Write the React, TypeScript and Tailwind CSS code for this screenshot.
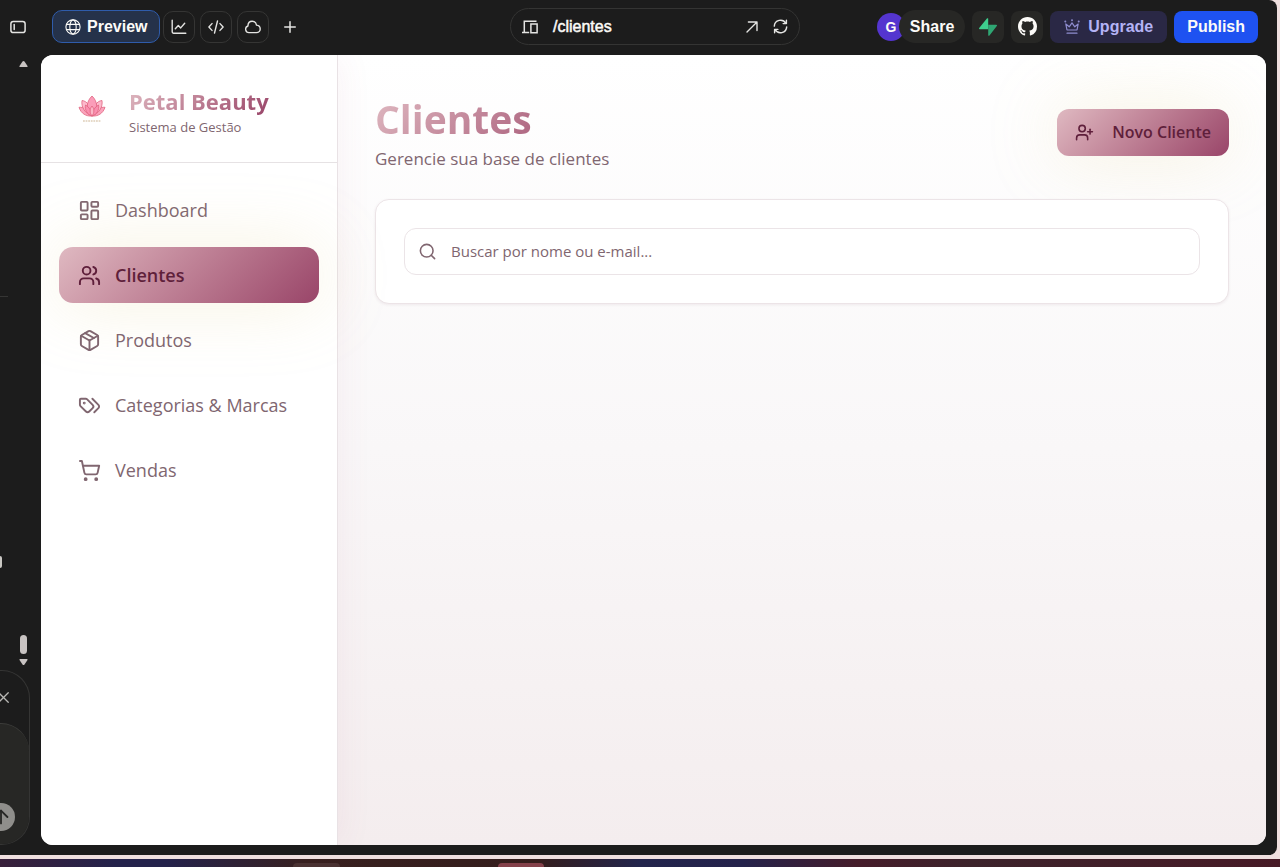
import type { ReactNode } from "react";
import {
  ArrowUp,
  LayoutDashboard,
  Package,
  Plus,
  Search,
  ShoppingCart,
  UserPlus,
  Users,
  X,
} from "lucide-react";

type IconProps = { className?: string };

const stroke = {
  viewBox: "0 0 24 24",
  fill: "none",
  stroke: "currentColor",
  strokeLinecap: "round" as const,
  strokeLinejoin: "round" as const,
  "aria-hidden": true,
};

function TagsIcon({ className }: IconProps) {
  return (
    <svg {...stroke} strokeWidth="2" className={className}>
      <path d="m15 5 6.3 6.3a2.4 2.4 0 0 1 0 3.4L17 19" />
      <path d="M9.586 5.586A2 2 0 0 0 8.172 5H3a1 1 0 0 0-1 1v5.172a2 2 0 0 0 .586 1.414L8.29 18.29a2.426 2.426 0 0 0 3.42 0l3.58-3.58a2.426 2.426 0 0 0 0-3.42z" />
      <circle cx="6.5" cy="9.5" r=".5" fill="currentColor" />
    </svg>
  );
}

function SidebarToggleIcon({ className }: IconProps) {
  return (
    <svg {...stroke} viewBox="0 0 16 14" strokeWidth="1.5" className={className}>
      <rect x="0.9" y="1.4" width="14.2" height="11.2" rx="2.4" />
      <path d="M4.2 4.4v5.2" />
    </svg>
  );
}

function GlobeIcon({ className }: IconProps) {
  return (
    <svg {...stroke} viewBox="0 0 16 16" strokeWidth="1.1" className={className}>
      <circle cx="8" cy="8" r="7.1" />
      <ellipse cx="8" cy="8" rx="3.2" ry="7.1" />
      <path d="M1.6 5.4h12.8M1.6 10.6h12.8" />
    </svg>
  );
}

function ChartIcon({ className }: IconProps) {
  return (
    <svg {...stroke} viewBox="0 0 16 16" strokeWidth="1.4" className={className}>
      <path d="M1.2 1.2v11.6a1.4 1.4 0 0 0 1.4 1.4h12.2M4.3 9.8l3-3.2 2.4 2.3 4-4.6" />
    </svg>
  );
}

function CodeIcon({ className }: IconProps) {
  return (
    <svg {...stroke} viewBox="0 0 16 14" strokeWidth="1.4" className={className}>
      <path d="M4 3.6.9 7 4 10.4M12 3.6 15.1 7 12 10.4M9.5 1 6.5 13" />
    </svg>
  );
}

function CloudIcon({ className }: IconProps) {
  return (
    <svg {...stroke} viewBox="0 0 16 14" strokeWidth="1.4" className={className}>
      <path d="M4.2 12.6a3.4 3.4 0 0 1-1.300-6.600C3 3.200 4.800 1.200 7.200 1.200c2.300 0 3.900 1.600 4.300 3.900 2.200.2 3.700 1.800 3.700 3.800s-1.600 3.700-3.700 3.700z" />
    </svg>
  );
}

function DevicesIcon({ className }: IconProps) {
  return (
    <svg {...stroke} viewBox="0 0 16 14" strokeWidth="1.5" strokeLinecap="butt" strokeLinejoin="miter" className={className}>
      <path d="M2.3 12.4V1.2h12.2M0 12.6h7.2M8.9 3.9h6.2v8.8H8.9z" />
    </svg>
  );
}

function ArrowIcon({ className }: IconProps) {
  return (
    <svg {...stroke} viewBox="0 0 12 12" strokeWidth="1.4" className={className}>
      <path d="M1 11 11 1M2.4 1H11v8.6" />
    </svg>
  );
}

function RefreshIcon({ className }: IconProps) {
  return (
    <svg {...stroke} viewBox="0 0 16 16" strokeWidth="1.5" className={className}>
      <path d="M1.400 7.600a6.600 6.600 0 0 1 12.300-3M14.300 1.400v3.500h-3.500M14.600 8.400a6.600 6.600 0 0 1-12.300 3M1.700 14.600v-3.500h3.500" />
    </svg>
  );
}

function SupabaseIcon({ className }: IconProps) {
  return (
    <svg viewBox="0 0 18 18" aria-hidden="true" className={className}>
      <path d="M9.200 17.300V6.700h8c.8 0 1.100.8.600 1.400l-7.300 9.400c-.5.6-1.300.400-1.300-.2z" fill="#2fa673" />
      <path d="M9.200.7v10.600H.8c-.7 0-1-.8-.6-1.400L7.900.5c.5-.6 1.300-.400 1.300.2z" fill="#3ecf8e" />
    </svg>
  );
}

function GithubIcon({ className }: IconProps) {
  return (
    <svg viewBox="0 0 16 16" fill="currentColor" aria-hidden="true" className={className}>
      <path d="M8 0C3.58 0 0 3.58 0 8c0 3.54 2.29 6.53 5.47 7.59.4.07.55-.17.55-.38 0-.19-.01-.82-.01-1.49-2.01.37-2.53-.49-2.69-.94-.09-.23-.48-.94-.82-1.13-.28-.15-.68-.52-.01-.53.63-.01 1.08.58 1.23.82.72 1.21 1.87.87 2.33.66.07-.52.28-.87.51-1.07-1.78-.2-3.64-.89-3.64-3.95 0-.87.31-1.59.82-2.15-.08-.2-.36-1.02.08-2.12 0 0 .67-.21 2.2.82.64-.18 1.32-.27 2-.27s1.36.09 2 .27c1.53-1.04 2.2-.82 2.2-.82.44 1.1.16 1.92.08 2.12.51.56.82 1.27.82 2.15 0 3.07-1.87 3.75-3.65 3.95.29.25.54.73.54 1.48 0 1.07-.01 1.93-.01 2.2 0 .21.15.46.55.38A8.01 8.01 0 0 0 16 8c0-4.42-3.58-8-8-8" />
    </svg>
  );
}

function CrownIcon({ className }: IconProps) {
  return (
    <svg {...stroke} viewBox="0 0 16 16" strokeWidth="1.2" className={className}>
      <path d="M1.8 5 3 11h10l1.200-6-3.400 2.800L8 3.900 5.200 7.800zM3 14.200h10" />
      <circle cx="1.3" cy="2.4" r=".4" />
      <circle cx="8" cy="1.2" r=".4" />
      <circle cx="14.7" cy="2.4" r=".4" />
    </svg>
  );
}

function LotusLogo({ className }: IconProps) {
  return (
    <svg viewBox="0 0 28 28" stroke="#e0637f" strokeWidth=".8" strokeLinejoin="round" aria-hidden="true" className={className}>
      <path d="M14 21C8 21.5 3 18.5 1 12.300c4-.5 8.500 1.500 13 8.700z" fill="#fba4bd" />
      <path d="M14 21c6 .5 11-2.500 13-8.700-4-.5-8.500 1.500-13 8.700z" fill="#fba4bd" />
      <path d="M14 21C7 18.500 3 12 4 5.500 9 6 13 11 14 21z" fill="#fdb9cc" />
      <path d="M14 21c7-2.500 11-9 10-15.500C19 6 15 11 14 21z" fill="#fdb9cc" />
      <path d="M14 21C7.500 15.500 8 6.500 14 1c6 5.500 6.500 14.500 0 20z" fill="#fb9db9" />
      <path d="M14 21C9 19.500 6.500 14.500 7.500 10c4 2 6 6 6.500 11z" fill="#fa8fb0" />
      <path d="M14 21c5-1.500 7.500-6.500 6.500-11-4 2-6 6-6.500 11z" fill="#fa8fb0" />
      <path d="M14 21c-2.500-3-2.500-7 0-10 2.500 3 2.500 7 0 10z" fill="#fcb7c8" />
      <path d="M5 26h18" stroke="#e6dac9" strokeWidth="2" strokeDasharray="1.800 .8" />
    </svg>
  );
}

function ToolButton({ label, children }: { label: string; children: ReactNode }) {
  return (
    <button
      type="button"
      aria-label={label}
      className="flex size-8 items-center justify-center rounded-[10px] border border-[#353534] text-[#e4e4e2]"
    >
      {children}
    </button>
  );
}

function TopBar() {
  return (
    <header className="grid h-[55px] shrink-0 grid-cols-[510fr_290fr_477fr] items-center pb-0.5 font-['Liberation_Sans',Arial,sans-serif] text-base font-bold text-[#fcfbf8]">
      <div className="flex items-center pl-2.5">
        <button type="button" aria-label="Alternar painel" className="mr-[26px]">
          <SidebarToggleIcon className="h-3.5 w-4 text-[#e4e4e2]" />
        </button>
        <button
          type="button"
          className="flex h-[33px] items-center gap-1.5 rounded-[10px] border border-[#2f5cab] bg-[#25324a] px-3"
        >
          <GlobeIcon className="size-4" />
          Preview
        </button>
        <div className="ml-[3px] flex gap-[5px]">
          <ToolButton label="Análises"><ChartIcon className="size-4" /></ToolButton>
          <ToolButton label="Código"><CodeIcon className="h-3.5 w-4" /></ToolButton>
          <ToolButton label="Nuvem"><CloudIcon className="h-3.5 w-4" /></ToolButton>
        </div>
        <button type="button" aria-label="Adicionar" className="ml-3">
          <Plus className="size-[18px] text-[#e4e4e2]" strokeWidth={2} />
        </button>
      </div>

      <div className="flex h-[37px] items-center rounded-full border border-[#343433] px-[11px] text-[#e4e4e2]">
        <DevicesIcon className="h-3.5 w-4" />
        <span className="ml-[15px] flex-1 font-medium text-[#fcfbf8] [-webkit-text-stroke:0.5px_currentColor]">
          /clientes
        </span>
        <button type="button" aria-label="Abrir em nova aba" className="mr-[15px]">
          <ArrowIcon className="size-3" />
        </button>
        <button type="button" aria-label="Recarregar">
          <RefreshIcon className="size-[15px]" />
        </button>
      </div>

      <div className="flex items-center justify-end gap-[7px] pr-[19px]">
        <div className="flex items-center">
          <span className="flex size-7 items-center justify-center rounded-full bg-[#5435cf] text-sm">G</span>
          <button type="button" className="-ml-1.5 h-[33px] rounded-full bg-[#272725] px-[11px]">
            Share
          </button>
        </div>
        <button type="button" aria-label="Supabase" className="flex size-8 items-center justify-center rounded-lg bg-[#272725]">
          <SupabaseIcon className="size-[18px]" />
        </button>
        <button type="button" aria-label="GitHub" className="flex size-8 items-center justify-center rounded-lg bg-[#272725]">
          <GithubIcon className="size-[19px]" />
        </button>
        <button type="button" className="flex h-8 items-center gap-2 rounded-lg bg-[#2a2845] px-3.5 text-[#b4b3f5]">
          <CrownIcon className="size-4 text-[#8f8dd0]" />
          Upgrade
        </button>
        <button type="button" className="h-8 rounded-lg bg-[#1e52f1] px-[13px]">
          Publish
        </button>
      </div>
    </header>
  );
}

function ChatEdge() {
  return (
    <div className="flex w-[41px] shrink-0 flex-col pb-2.5">
      <div className="flex flex-1 justify-between pr-[13px]">
        <div className="flex w-2 flex-col overflow-hidden pt-[241px]">
          <div className="h-px bg-[#353534]" />
          <div className="mt-auto mb-[102px] h-3 w-0.5 rounded-r-sm bg-[#c9c7c3]" />
        </div>
        <div className="flex w-[9px] flex-col items-center pt-1.5 pb-[5px] text-[#c8c3c2]">
          <svg viewBox="0 0 9 6" className="h-1.5 w-[9px]" aria-hidden="true">
            <path d="M3.500.6.5 5q-.3.9.6.9h6.800q.9 0 .6-.9L5.500.6q-1-1.100-2 0z" fill="currentColor" />
          </svg>
          <div className="mt-auto h-[19px] w-[7px] rounded-full bg-current" />
          <svg viewBox="0 0 9 6" className="mt-[5px] h-1.5 w-[9px]" aria-hidden="true">
            <path d="M3.500 5.400.5 1Q.2.100 1.100.100h6.800q.9 0 .6.900L5.500 5.400q-1 1.100-2 0z" fill="currentColor" />
          </svg>
        </div>
      </div>
      <div className="flex h-[175px] w-[30px] flex-col overflow-hidden rounded-r-[28px] border-y border-r border-[#353534]">
        <button type="button" aria-label="Fechar" className="-ml-1.5 flex h-[52px] items-center text-[#b9b8b5]">
          <X className="size-[19px]" strokeWidth={1.6} />
        </button>
        <div className="flex flex-1 items-end rounded-tr-[28px] border-t border-[#3c3c3a] bg-[#272725] pb-[13px]">
          <button type="button" aria-label="Enviar" className="-ml-[13px] flex size-7 shrink-0 items-center justify-center rounded-full bg-[#8f8e8b] text-[#272725]">
            <ArrowUp className="size-[22px]" strokeWidth={2} />
          </button>
        </div>
      </div>
    </div>
  );
}

const navItems = [
  { label: "Dashboard", icon: LayoutDashboard, active: false },
  { label: "Clientes", icon: Users, active: true },
  { label: "Produtos", icon: Package, active: false },
  { label: "Categorias & Marcas", icon: TagsIcon, active: false },
  { label: "Vendas", icon: ShoppingCart, active: false },
];

function Sidebar() {
  return (
    <aside className="z-10 flex w-[297px] shrink-0 flex-col border-r border-[#e9e2e5] bg-white shadow-[4px_0_32px_rgba(163,76,111,0.06)]">
      <div className="flex h-[108px] items-center gap-[23px] border-b border-[#e6e2e4] pl-[37px]">
        <LotusLogo className="size-7" />
        <div className="pt-2">
          <p className="w-fit bg-linear-135 from-[#dfb9c1] to-[#994569] bg-clip-text text-[22px] leading-7 font-bold text-transparent">
            Petal Beauty
          </p>
          <p className="text-[13px] leading-6 text-[#806670]">Sistema de Gestão</p>
        </div>
      </div>
      <nav className="flex flex-col gap-[9px] px-[18px] py-[19px]">
        {navItems.map(({ label, icon: Icon, active }) => (
          <a
            key={label}
            href="#"
            aria-current={active ? "page" : undefined}
            className={
              active
                ? "flex h-14 items-center gap-3.5 rounded-[14px] bg-linear-135 from-[#dfb9c1] to-[#994569] px-[19px] text-lg font-semibold text-[#5f1f3b] shadow-[0_0_70px_rgba(226,205,130,0.26)]"
                : "flex h-14 items-center gap-3.5 rounded-[14px] px-[19px] text-lg text-[#806670]"
            }
          >
            <Icon className="size-[23px]" />
            {label}
          </a>
        ))}
      </nav>
    </aside>
  );
}

function Clientes() {
  return (
    <main className="min-w-0 flex-1 bg-linear-to-b from-white via-[#f9f7f8] to-[#f4edee] px-[37px] pt-10">
      <div className="flex items-center justify-between">
        <div>
          <h1 className="bg-linear-135 from-[#dfb9c1] to-[#994569] bg-clip-text text-[39px] leading-[48px] font-bold text-transparent">
            Clientes
          </h1>
          <p className="mt-1.5 text-[17px] leading-5 text-[#806670]">Gerencie sua base de clientes</p>
        </div>
        <button
          type="button"
          className="flex h-[47px] items-center gap-[18px] rounded-xl bg-linear-135 from-[#dfb9c1] to-[#994569] px-[18px] text-base font-semibold text-[#5f1f3b] shadow-[0_0_70px_rgba(226,205,130,0.26)]"
        >
          <UserPlus className="size-[19px]" />
          Novo Cliente
        </button>
      </div>
      <section className="relative mt-[30px] rounded-[14px] border border-[#ece4e7] bg-white p-7 shadow-[0_1px_3px_rgba(90,40,60,0.08)]">
        <label className="flex h-[47px] items-center gap-3.5 rounded-xl border border-[#ebe4e7] px-[13px]">
          <Search className="size-[19px] shrink-0 text-[#806670]" />
          <input
            type="search"
            aria-label="Buscar clientes"
            placeholder="Buscar por nome ou e-mail..."
            className="min-w-0 flex-1 bg-transparent text-[15px] outline-none placeholder:text-[#806670]"
          />
        </label>
      </section>
    </main>
  );
}

function Taskbar() {
  return (
    <div className="mt-1 grid h-2 shrink-0 grid-cols-[293fr_47fr_158fr_46fr_736fr] items-end bg-[linear-gradient(90deg,#38203a_0%,#24224b_9%,#24224b_13%,#38201f_24%,#341d1c_42%,#22244c_50%,#24224b_58%,#451c2a_67%,#3c232b_76%,#471a26_100%)]">
      <div className="col-start-2 h-1 rounded-t bg-[#4a3232]" />
      <div className="col-start-4 h-1 rounded-t bg-[#84414a]" />
    </div>
  );
}

export default function App() {
  return (
    <div className="flex h-screen flex-col bg-[#efdfdf] font-['Open_Sans','Noto_Sans',sans-serif]">
      <div className="mr-[3px] flex min-h-0 flex-1 flex-col rounded-r-lg bg-[#1c1c1c]">
        <TopBar />
        <div className="flex min-h-0 flex-1">
          <ChatEdge />
          <div className="mr-[11px] mb-2.5 flex min-w-0 flex-1 overflow-hidden rounded-xl bg-white">
            <Sidebar />
            <Clientes />
          </div>
        </div>
      </div>
      <Taskbar />
    </div>
  );
}
